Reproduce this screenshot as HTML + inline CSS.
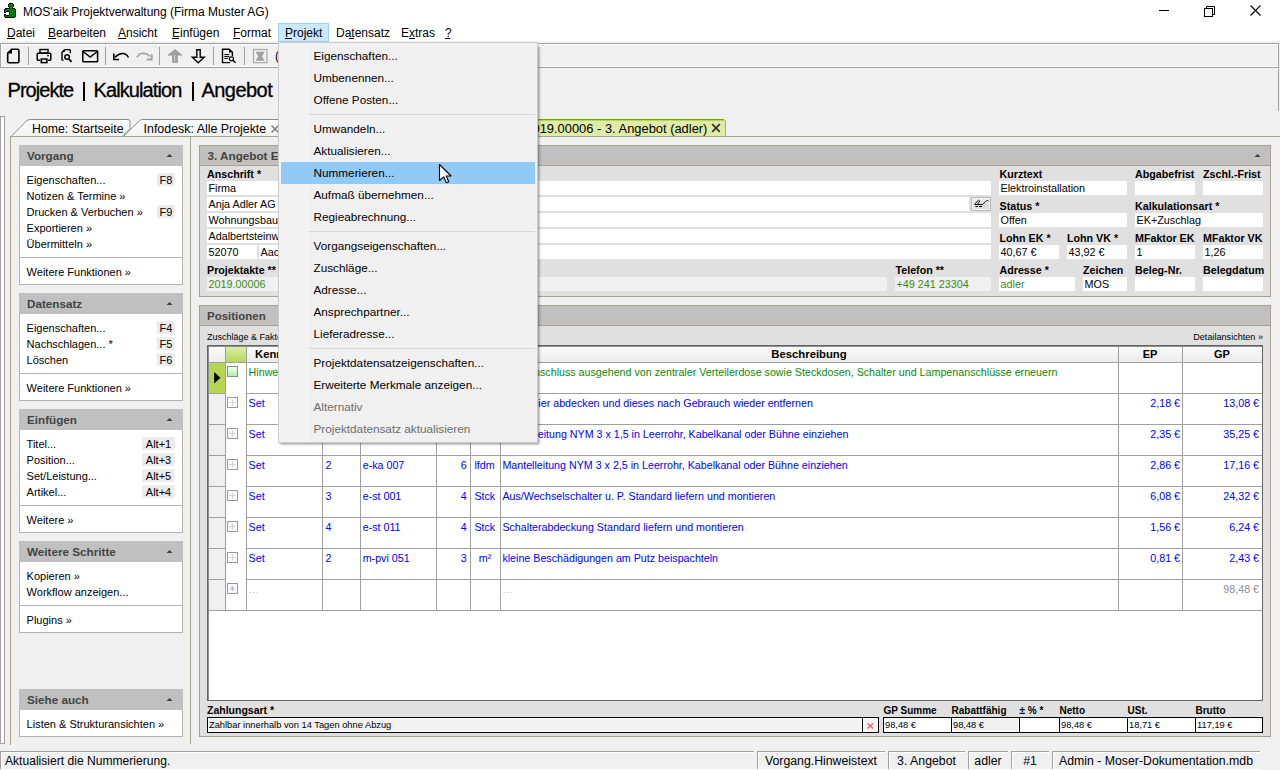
<!DOCTYPE html><html><head><meta charset="utf-8"><style>
html,body{margin:0;padding:0;}
body{width:1280px;height:770px;position:relative;overflow:hidden;background:#f0f0f0;font-family:"Liberation Sans",sans-serif;}
div{position:absolute;box-sizing:border-box;}
.t{white-space:nowrap;line-height:1;}
u{text-decoration:none;border-bottom:1px solid currentColor;}
</style></head><body>
<div style="left:0px;top:0px;width:1280px;height:41px;background:#fff"></div>
<svg style="position:absolute;left:0px;top:0px;" width="22" height="22" viewBox="0 0 22 22"><g shape-rendering="crispEdges"><rect x="9" y="3" width="1" height="1" fill="#000"/><rect x="10" y="3" width="1" height="1" fill="#000"/><rect x="11" y="3" width="1" height="1" fill="#000"/><rect x="12" y="3" width="1" height="1" fill="#000"/><rect x="8" y="4" width="1" height="1" fill="#000"/><rect x="9" y="4" width="1" height="1" fill="#008000"/><rect x="10" y="4" width="1" height="1" fill="#008000"/><rect x="11" y="4" width="1" height="1" fill="#008000"/><rect x="12" y="4" width="1" height="1" fill="#008000"/><rect x="13" y="4" width="1" height="1" fill="#000"/><rect x="8" y="5" width="1" height="1" fill="#000"/><rect x="9" y="5" width="1" height="1" fill="#008000"/><rect x="10" y="5" width="1" height="1" fill="#008000"/><rect x="11" y="5" width="1" height="1" fill="#008000"/><rect x="12" y="5" width="1" height="1" fill="#008000"/><rect x="13" y="5" width="1" height="1" fill="#000"/><rect x="8" y="6" width="1" height="1" fill="#000"/><rect x="9" y="6" width="1" height="1" fill="#008000"/><rect x="10" y="6" width="1" height="1" fill="#008000"/><rect x="11" y="6" width="1" height="1" fill="#008000"/><rect x="12" y="6" width="1" height="1" fill="#008000"/><rect x="13" y="6" width="1" height="1" fill="#000"/><rect x="9" y="7" width="1" height="1" fill="#000"/><rect x="10" y="7" width="1" height="1" fill="#008000"/><rect x="11" y="7" width="1" height="1" fill="#008000"/><rect x="12" y="7" width="1" height="1" fill="#000"/><rect x="5" y="8" width="1" height="1" fill="#000"/><rect x="6" y="8" width="1" height="1" fill="#000"/><rect x="7" y="8" width="1" height="1" fill="#000"/><rect x="8" y="8" width="1" height="1" fill="#000"/><rect x="9" y="8" width="1" height="1" fill="#000"/><rect x="10" y="8" width="1" height="1" fill="#008000"/><rect x="11" y="8" width="1" height="1" fill="#008000"/><rect x="12" y="8" width="1" height="1" fill="#000"/><rect x="13" y="8" width="1" height="1" fill="#000"/><rect x="14" y="8" width="1" height="1" fill="#000"/><rect x="4" y="9" width="1" height="1" fill="#000"/><rect x="15" y="9" width="1" height="1" fill="#000"/><rect x="5" y="9" width="1" height="1" fill="#008000"/><rect x="6" y="9" width="1" height="1" fill="#008000"/><rect x="7" y="9" width="1" height="1" fill="#008000"/><rect x="8" y="9" width="1" height="1" fill="#008000"/><rect x="9" y="9" width="1" height="1" fill="#008000"/><rect x="10" y="9" width="1" height="1" fill="#008000"/><rect x="11" y="9" width="1" height="1" fill="#008000"/><rect x="12" y="9" width="1" height="1" fill="#008000"/><rect x="13" y="9" width="1" height="1" fill="#008000"/><rect x="14" y="9" width="1" height="1" fill="#008000"/><rect x="4" y="10" width="1" height="1" fill="#000"/><rect x="15" y="10" width="1" height="1" fill="#000"/><rect x="5" y="10" width="1" height="1" fill="#008000"/><rect x="6" y="10" width="1" height="1" fill="#008000"/><rect x="7" y="10" width="1" height="1" fill="#008000"/><rect x="8" y="10" width="1" height="1" fill="#008000"/><rect x="9" y="10" width="1" height="1" fill="#008000"/><rect x="10" y="10" width="1" height="1" fill="#008000"/><rect x="11" y="10" width="1" height="1" fill="#008000"/><rect x="12" y="10" width="1" height="1" fill="#008000"/><rect x="13" y="10" width="1" height="1" fill="#008000"/><rect x="14" y="10" width="1" height="1" fill="#008000"/><rect x="4" y="16" width="1" height="1" fill="#000"/><rect x="15" y="16" width="1" height="1" fill="#000"/><rect x="5" y="16" width="1" height="1" fill="#008000"/><rect x="6" y="16" width="1" height="1" fill="#008000"/><rect x="7" y="16" width="1" height="1" fill="#008000"/><rect x="8" y="16" width="1" height="1" fill="#008000"/><rect x="9" y="16" width="1" height="1" fill="#008000"/><rect x="10" y="16" width="1" height="1" fill="#008000"/><rect x="11" y="16" width="1" height="1" fill="#008000"/><rect x="12" y="16" width="1" height="1" fill="#008000"/><rect x="13" y="16" width="1" height="1" fill="#008000"/><rect x="14" y="16" width="1" height="1" fill="#008000"/><rect x="4" y="11" width="1" height="1" fill="#000"/><rect x="5" y="11" width="1" height="1" fill="#008000"/><rect x="6" y="11" width="1" height="1" fill="#000"/><rect x="7" y="11" width="1" height="1" fill="#000"/><rect x="8" y="11" width="1" height="1" fill="#000"/><rect x="15" y="11" width="1" height="1" fill="#000"/><rect x="9" y="11" width="1" height="1" fill="#008000"/><rect x="10" y="11" width="1" height="1" fill="#008000"/><rect x="11" y="11" width="1" height="1" fill="#008000"/><rect x="12" y="11" width="1" height="1" fill="#008000"/><rect x="13" y="11" width="1" height="1" fill="#008000"/><rect x="14" y="11" width="1" height="1" fill="#008000"/><rect x="4" y="15" width="1" height="1" fill="#000"/><rect x="5" y="15" width="1" height="1" fill="#008000"/><rect x="6" y="15" width="1" height="1" fill="#000"/><rect x="7" y="15" width="1" height="1" fill="#000"/><rect x="8" y="15" width="1" height="1" fill="#000"/><rect x="15" y="15" width="1" height="1" fill="#000"/><rect x="9" y="15" width="1" height="1" fill="#008000"/><rect x="10" y="15" width="1" height="1" fill="#008000"/><rect x="11" y="15" width="1" height="1" fill="#008000"/><rect x="12" y="15" width="1" height="1" fill="#008000"/><rect x="13" y="15" width="1" height="1" fill="#008000"/><rect x="14" y="15" width="1" height="1" fill="#008000"/><rect x="4" y="12" width="1" height="1" fill="#000"/><rect x="5" y="12" width="1" height="1" fill="#000"/><rect x="6" y="12" width="1" height="1" fill="#fff"/><rect x="7" y="12" width="1" height="1" fill="#fff"/><rect x="8" y="12" width="1" height="1" fill="#fff"/><rect x="9" y="12" width="1" height="1" fill="#000"/><rect x="15" y="12" width="1" height="1" fill="#000"/><rect x="10" y="12" width="1" height="1" fill="#008000"/><rect x="11" y="12" width="1" height="1" fill="#008000"/><rect x="12" y="12" width="1" height="1" fill="#008000"/><rect x="13" y="12" width="1" height="1" fill="#008000"/><rect x="14" y="12" width="1" height="1" fill="#008000"/><rect x="4" y="14" width="1" height="1" fill="#000"/><rect x="5" y="14" width="1" height="1" fill="#000"/><rect x="6" y="14" width="1" height="1" fill="#fff"/><rect x="7" y="14" width="1" height="1" fill="#fff"/><rect x="8" y="14" width="1" height="1" fill="#fff"/><rect x="9" y="14" width="1" height="1" fill="#000"/><rect x="15" y="14" width="1" height="1" fill="#000"/><rect x="10" y="14" width="1" height="1" fill="#008000"/><rect x="11" y="14" width="1" height="1" fill="#008000"/><rect x="12" y="14" width="1" height="1" fill="#008000"/><rect x="13" y="14" width="1" height="1" fill="#008000"/><rect x="14" y="14" width="1" height="1" fill="#008000"/><rect x="4" y="13" width="1" height="1" fill="#fff"/><rect x="5" y="13" width="1" height="1" fill="#fff"/><rect x="6" y="13" width="1" height="1" fill="#fff"/><rect x="7" y="13" width="1" height="1" fill="#fff"/><rect x="8" y="13" width="1" height="1" fill="#fff"/><rect x="9" y="13" width="1" height="1" fill="#000"/><rect x="15" y="13" width="1" height="1" fill="#000"/><rect x="10" y="13" width="1" height="1" fill="#008000"/><rect x="11" y="13" width="1" height="1" fill="#008000"/><rect x="12" y="13" width="1" height="1" fill="#008000"/><rect x="13" y="13" width="1" height="1" fill="#008000"/><rect x="14" y="13" width="1" height="1" fill="#008000"/><rect x="5" y="17" width="1" height="1" fill="#000"/><rect x="6" y="17" width="1" height="1" fill="#000"/><rect x="7" y="17" width="1" height="1" fill="#000"/><rect x="8" y="17" width="1" height="1" fill="#000"/><rect x="9" y="17" width="1" height="1" fill="#000"/><rect x="10" y="17" width="1" height="1" fill="#000"/><rect x="11" y="17" width="1" height="1" fill="#000"/><rect x="12" y="17" width="1" height="1" fill="#000"/><rect x="13" y="17" width="1" height="1" fill="#000"/><rect x="14" y="17" width="1" height="1" fill="#000"/></g></svg>
<div class="t" style="left:23px;top:6px;font-size:12px;color:#000;font-weight:normal;">MOS&#x27;aik Projektverwaltung (Firma Muster AG)</div>
<div style="left:1159px;top:10px;width:10px;height:1px;background:#000"></div>
<svg style="position:absolute;left:1200px;top:3px;" width="16" height="16" viewBox="0 0 16 16"><rect x="4.5" y="5.5" width="8" height="8" fill="none" stroke="#000" stroke-width="1"/><path d="M6.5 5.5v-2h8v8h-2" fill="none" stroke="#000" stroke-width="1"/></svg>
<svg style="position:absolute;left:1248px;top:3px;" width="16" height="16" viewBox="0 0 16 16"><path d="M2.5 2.5l10 10M12.5 2.5l-10 10" stroke="#000" stroke-width="1.1"/></svg>
<div style="left:278px;top:23px;width:51px;height:19px;background:#cce8ff;border:1px solid #99d1ff"></div>
<div class="t" style="left:7px;top:27px;font-size:12px;color:#000;font-weight:normal;">Datei</div>
<div class="t" style="left:48px;top:27px;font-size:12px;color:#000;font-weight:normal;">Bearbeiten</div>
<div class="t" style="left:118px;top:27px;font-size:12px;color:#000;font-weight:normal;">Ansicht</div>
<div class="t" style="left:172px;top:27px;font-size:12px;color:#000;font-weight:normal;">Einfügen</div>
<div class="t" style="left:233px;top:27px;font-size:12px;color:#000;font-weight:normal;">Format</div>
<div class="t" style="left:285px;top:27px;font-size:12px;color:#000;font-weight:normal;">Projekt</div>
<div class="t" style="left:336px;top:27px;font-size:12px;color:#000;font-weight:normal;">Datensatz</div>
<div class="t" style="left:401px;top:27px;font-size:12px;color:#000;font-weight:normal;">Extras</div>
<div class="t" style="left:445px;top:27px;font-size:12px;color:#000;font-weight:normal;">?</div>
<div style="left:7px;top:38px;width:8px;height:1px;background:#000"></div>
<div style="left:48px;top:38px;width:8px;height:1px;background:#000"></div>
<div style="left:118px;top:38px;width:8px;height:1px;background:#000"></div>
<div style="left:172px;top:38px;width:7px;height:1px;background:#000"></div>
<div style="left:233px;top:38px;width:7px;height:1px;background:#000"></div>
<div style="left:285px;top:38px;width:7px;height:1px;background:#000"></div>
<div style="left:349px;top:38px;width:5px;height:1px;background:#000"></div>
<div style="left:409px;top:38px;width:6px;height:1px;background:#000"></div>
<div style="left:445px;top:38px;width:5px;height:1px;background:#000"></div>
<div style="left:0px;top:43px;width:1279px;height:25px;background:#f0f0f0;border:1px solid #a0a0a0;box-shadow:inset 1px 1px 0 #fff, inset -1px -1px 0 #fff"></div>
<div style="left:28px;top:47px;width:1px;height:18px;background:#a0a0a0"></div>
<div style="left:105px;top:47px;width:1px;height:18px;background:#a0a0a0"></div>
<div style="left:159px;top:47px;width:1px;height:18px;background:#a0a0a0"></div>
<div style="left:213px;top:47px;width:1px;height:18px;background:#a0a0a0"></div>
<div style="left:244px;top:47px;width:1px;height:18px;background:#a0a0a0"></div>
<svg style="position:absolute;left:5px;top:47px;" width="16" height="18" viewBox="0 0 16 18"><path d="M7 2.2h5.6a1.3 1.3 0 0 1 1.3 1.3v11a1.3 1.3 0 0 1-1.3 1.3h-8.6a1.3 1.3 0 0 1-1.3-1.3v-8.4z" fill="none" stroke="#000" stroke-width="1.6" stroke-linejoin="round"/><path d="M7 2.2v4.2h-4.3z" fill="#000"/></svg>
<svg style="position:absolute;left:35px;top:47px;" width="18" height="18" viewBox="0 0 18 18"><rect x="5" y="2.5" width="8" height="3.5" fill="none" stroke="#000" stroke-width="1.4"/><path d="M5.2 13.2h-2a1 1 0 0 1-1-1v-5a1 1 0 0 1 1-1h11.6a1 1 0 0 1 1 1v5a1 1 0 0 1-1 1h-2" fill="none" stroke="#000" stroke-width="1.5"/><rect x="6.3" y="12" width="5.6" height="3.6" fill="none" stroke="#000" stroke-width="1.5"/><circle cx="13" cy="8.6" r="0.9" fill="#000"/></svg>
<svg style="position:absolute;left:59px;top:47px;" width="16" height="18" viewBox="0 0 16 18"><path d="M6 2.6h4.5a0.8 0.8 0 0 1 0.8 0.8v2.6M4.5 13.4h-0.5a1 1 0 0 1-1-1v-7l2.8-2.8" fill="none" stroke="#000" stroke-width="1.4"/><path d="M6 2.6v2.2h-2.2z" fill="#000"/><circle cx="8.1" cy="10" r="2.3" fill="none" stroke="#000" stroke-width="1.5"/><path d="M9.8 11.8l2.8 3" stroke="#000" stroke-width="1.7"/></svg>
<svg style="position:absolute;left:80px;top:47px;" width="20" height="18" viewBox="0 0 20 18"><rect x="2.8" y="3.7" width="14.8" height="11" rx="0.8" fill="none" stroke="#000" stroke-width="1.5"/><path d="M3 4.5l7.2 5.6 7.2-5.6" fill="none" stroke="#000" stroke-width="1.5"/></svg>
<svg style="position:absolute;left:110px;top:47px;" width="22" height="18" viewBox="0 0 22 18"><path d="M18.5 10.5c-2.6-5-8.5-5.5-13.5-0.2" fill="none" stroke="#000" stroke-width="1.5"/><path d="M3.8 6.5v6h5.2" fill="none" stroke="#000" stroke-width="1.6"/></svg>
<svg style="position:absolute;left:134px;top:47px;" width="22" height="18" viewBox="0 0 22 18"><path d="M2.8 10.3l3.2-3.5 3.5-0.5 3 0.6 3.8 2.5" fill="none" stroke="#a0a0a0" stroke-width="1.6"/><path d="M17.8 7.2v5.3h-5" fill="none" stroke="#a0a0a0" stroke-width="1.8"/></svg>
<svg style="position:absolute;left:166px;top:47px;" width="18" height="18" viewBox="0 0 18 18"><path d="M9 2.5l6.8 5.6h-4.4v7.4h-4.8v-7.4h-4.4z" fill="#a0a0a0" stroke="#a0a0a0" stroke-width="1"/><path d="M8.5 8.5v6M8.5 8.5h1" stroke="#f0f0f0" stroke-width="0.6"/></svg>
<svg style="position:absolute;left:190px;top:47px;" width="18" height="18" viewBox="0 0 18 18"><path d="M6.8 2.8h3.4v7.4h4l-6 5.5-5.9-5.5h4.5z" fill="none" stroke="#000" stroke-width="1.4" stroke-linejoin="miter"/></svg>
<svg style="position:absolute;left:220px;top:47px;" width="18" height="18" viewBox="0 0 18 18"><path d="M9.3 2.3h-6.8v13.3h7.6M9.3 2.3l3.1 3v4" fill="none" stroke="#000" stroke-width="1.4"/><path d="M9 2.5v3h3z" fill="#000"/><path d="M4.3 7.6h5M4.3 9.5h5M4.3 11.4h3.8" stroke="#000" stroke-width="1"/><circle cx="11.5" cy="11.8" r="2" fill="#fff" stroke="#000" stroke-width="1.3"/><path d="M13 13.3l2.6 2.5" stroke="#000" stroke-width="1.3"/></svg>
<svg style="position:absolute;left:251px;top:47px;" width="18" height="18" viewBox="0 0 18 18"><rect x="2.5" y="2.5" width="13.5" height="13.2" fill="none" stroke="#a8a8a8" stroke-width="1.2"/><path d="M4.5 4.8h9.2l-2.8 4.4 2.8 4.6h-9.2l2.8-4.6z" fill="#a0a0a0"/></svg>
<div class="t" style="left:275px;top:50px;font-size:12px;color:#000;font-weight:normal;">(</div>
<div style="left:0px;top:116px;width:5px;height:628px;border:1px solid #a0a0a0;background:#fff"></div>
<div style="left:1278px;top:69px;width:2px;height:42px;border-left:1px solid #a0a0a0"></div>
<div style="left:1278px;top:136px;width:2px;height:608px;border-left:1px solid #a0a0a0"></div>
<div class="t" style="left:7.5px;top:80px;font-size:20px;color:#000;font-weight:normal;letter-spacing:-0.95px;-webkit-text-stroke:0.3px #000">Projekte</div>
<div style="left:83px;top:82px;width:2px;height:19px;background:#000"></div>
<div class="t" style="left:93.5px;top:80px;font-size:20px;color:#000;font-weight:normal;letter-spacing:-0.9px;-webkit-text-stroke:0.3px #000">Kalkulation</div>
<div style="left:192px;top:82px;width:2px;height:19px;background:#000"></div>
<div class="t" style="left:201.5px;top:80px;font-size:20px;color:#000;font-weight:normal;letter-spacing:-0.55px;-webkit-text-stroke:0.3px #000">Angebot</div>
<div style="left:10px;top:136px;width:1270px;height:609px;border-left:1px solid #a6a491;border-top:1px solid #a6a491;background:#f0f0f0"></div>
<div style="left:190px;top:137px;width:2px;height:607px;border-left:1px solid #a6a491"></div>
<svg style="position:absolute;left:10px;top:118px;" width="132" height="19" viewBox="0 0 132 19"><defs><linearGradient id="tg" x1="0" y1="0" x2="0" y2="1"><stop offset="0" stop-color="#ffffff"/><stop offset="1" stop-color="#f2f2f2"/></linearGradient></defs><path d="M1 18.5L16 3.5q2-2 4-2h98a2 2 0 0 1 2 2v7l-8 8z" fill="url(#tg)" stroke="#8c8c8c" stroke-width="1"/></svg>
<div class="t" style="left:32px;top:123px;font-size:12.3px;color:#000;font-weight:normal;">Home: Startseite</div>
<svg style="position:absolute;left:122px;top:118px;" width="170" height="19" viewBox="0 0 170 19"><defs><linearGradient id="tg2" x1="0" y1="0" x2="0" y2="1"><stop offset="0" stop-color="#ffffff"/><stop offset="1" stop-color="#f2f2f2"/></linearGradient></defs><path d="M1.5 18.5L16.5 3.5q2-2 4-2h148v17z" fill="url(#tg2)" stroke="#8c8c8c" stroke-width="1"/></svg>
<div class="t" style="left:143.6px;top:123px;font-size:12.4px;color:#000;font-weight:normal;">Infodesk: Alle Projekte</div>
<svg style="position:absolute;left:270px;top:124px;" width="10" height="10" viewBox="0 0 10 10"><path d="M1.5 1.5l7 7M8.5 1.5l-7 7" stroke="#808080" stroke-width="1.6"/></svg>
<svg style="position:absolute;left:480px;top:118px;" width="247" height="19" viewBox="0 0 247 19"><path d="M1 18L18 1h226l1 1v16z" fill="#dfeba6"/><path d="M18 1.5h225.5" stroke="#6aa000" stroke-width="1"/><path d="M17 2.5h227" stroke="#b6da4e" stroke-width="1"/><path d="M245.5 3v15" stroke="#a6a6a6" stroke-width="1"/><path d="M244 1.5l1.5 1.5" stroke="#8ab850" stroke-width="1"/></svg>
<div class="t" style="right:572.6px;top:123px;font-size:12.9px;color:#000;font-weight:normal;">2019.00006 - 3. Angebot (adler)</div>
<svg style="position:absolute;left:710px;top:122px;" width="12" height="12" viewBox="0 0 12 12"><path d="M2.2 2.2l7.6 7.6M9.8 2.2l-7.6 7.6" stroke="#383838" stroke-width="1.8"/></svg>
<div style="left:10px;top:136px;width:1270px;height:1px;background:#a6a491"></div>
<div style="left:19px;top:145px;width:164px;height:21px;background:#c0c0c0"></div>
<div class="t" style="left:27px;top:150px;font-size:11.7px;color:#444;font-weight:bold;">Vorgang</div>
<svg style="position:absolute;left:166px;top:153px;" width="8" height="5" viewBox="0 0 8 5"><path d="M0.5 4L3.5 1 6.5 4z" fill="#404040"/></svg>
<div style="left:19px;top:166px;width:164px;height:119px;background:#fff;border:1px solid #b4b4b4;border-top:none"></div>
<div class="t" style="left:26.6px;top:175px;font-size:11px;color:#000;font-weight:normal;">Eigenschaften...</div>
<div style="left:157px;top:173.0px;width:18px;height:12.8px;background:#ececec"></div>
<div class="t" style="left:-34.0px;width:400px;text-align:center;top:175px;font-size:11px;color:#000;font-weight:normal;">F8</div>
<div class="t" style="left:26.6px;top:191px;font-size:11px;color:#000;font-weight:normal;">Notizen &amp; Termine »</div>
<div class="t" style="left:26.6px;top:207px;font-size:11px;color:#000;font-weight:normal;">Drucken &amp; Verbuchen »</div>
<div style="left:157px;top:205.0px;width:18px;height:12.8px;background:#ececec"></div>
<div class="t" style="left:-34.0px;width:400px;text-align:center;top:207px;font-size:11px;color:#000;font-weight:normal;">F9</div>
<div class="t" style="left:26.6px;top:223px;font-size:11px;color:#000;font-weight:normal;">Exportieren »</div>
<div class="t" style="left:26.6px;top:239px;font-size:11px;color:#000;font-weight:normal;">Übermitteln »</div>
<div style="left:19px;top:257px;width:164px;height:1px;background:#b4b4b4"></div>
<div class="t" style="left:26.6px;top:267px;font-size:11px;color:#000;font-weight:normal;">Weitere Funktionen »</div>
<div style="left:19px;top:293px;width:164px;height:21px;background:#c0c0c0"></div>
<div class="t" style="left:27px;top:298px;font-size:11.7px;color:#444;font-weight:bold;">Datensatz</div>
<svg style="position:absolute;left:166px;top:301px;" width="8" height="5" viewBox="0 0 8 5"><path d="M0.5 4L3.5 1 6.5 4z" fill="#404040"/></svg>
<div style="left:19px;top:314px;width:164px;height:87px;background:#fff;border:1px solid #b4b4b4;border-top:none"></div>
<div class="t" style="left:26.6px;top:323px;font-size:11px;color:#000;font-weight:normal;">Eigenschaften...</div>
<div style="left:157px;top:321.0px;width:18px;height:12.8px;background:#ececec"></div>
<div class="t" style="left:-34.0px;width:400px;text-align:center;top:323px;font-size:11px;color:#000;font-weight:normal;">F4</div>
<div class="t" style="left:26.6px;top:339px;font-size:11px;color:#000;font-weight:normal;">Nachschlagen... *</div>
<div style="left:157px;top:337.0px;width:18px;height:12.8px;background:#ececec"></div>
<div class="t" style="left:-34.0px;width:400px;text-align:center;top:339px;font-size:11px;color:#000;font-weight:normal;">F5</div>
<div class="t" style="left:26.6px;top:355px;font-size:11px;color:#000;font-weight:normal;">Löschen</div>
<div style="left:157px;top:353.0px;width:18px;height:12.8px;background:#ececec"></div>
<div class="t" style="left:-34.0px;width:400px;text-align:center;top:355px;font-size:11px;color:#000;font-weight:normal;">F6</div>
<div style="left:19px;top:373px;width:164px;height:1px;background:#b4b4b4"></div>
<div class="t" style="left:26.6px;top:383px;font-size:11px;color:#000;font-weight:normal;">Weitere Funktionen »</div>
<div style="left:19px;top:409px;width:164px;height:21px;background:#c0c0c0"></div>
<div class="t" style="left:27px;top:414px;font-size:11.7px;color:#444;font-weight:bold;">Einfügen</div>
<svg style="position:absolute;left:166px;top:417px;" width="8" height="5" viewBox="0 0 8 5"><path d="M0.5 4L3.5 1 6.5 4z" fill="#404040"/></svg>
<div style="left:19px;top:430px;width:164px;height:103px;background:#fff;border:1px solid #b4b4b4;border-top:none"></div>
<div class="t" style="left:26.6px;top:439px;font-size:11px;color:#000;font-weight:normal;">Titel...</div>
<div style="left:142px;top:437.2px;width:33px;height:12.8px;background:#ececec"></div>
<div class="t" style="left:-41.5px;width:400px;text-align:center;top:439px;font-size:11px;color:#000;font-weight:normal;">Alt+1</div>
<div class="t" style="left:26.6px;top:455px;font-size:11px;color:#000;font-weight:normal;">Position...</div>
<div style="left:142px;top:453.2px;width:33px;height:12.8px;background:#ececec"></div>
<div class="t" style="left:-41.5px;width:400px;text-align:center;top:455px;font-size:11px;color:#000;font-weight:normal;">Alt+3</div>
<div class="t" style="left:26.6px;top:471px;font-size:11px;color:#000;font-weight:normal;">Set/Leistung...</div>
<div style="left:142px;top:469.2px;width:33px;height:12.8px;background:#ececec"></div>
<div class="t" style="left:-41.5px;width:400px;text-align:center;top:471px;font-size:11px;color:#000;font-weight:normal;">Alt+5</div>
<div class="t" style="left:26.6px;top:487px;font-size:11px;color:#000;font-weight:normal;">Artikel...</div>
<div style="left:142px;top:485.2px;width:33px;height:12.8px;background:#ececec"></div>
<div class="t" style="left:-41.5px;width:400px;text-align:center;top:487px;font-size:11px;color:#000;font-weight:normal;">Alt+4</div>
<div style="left:19px;top:505px;width:164px;height:1px;background:#b4b4b4"></div>
<div class="t" style="left:26.6px;top:515px;font-size:11px;color:#000;font-weight:normal;">Weitere »</div>
<div style="left:19px;top:541px;width:164px;height:21px;background:#c0c0c0"></div>
<div class="t" style="left:27px;top:546px;font-size:11.7px;color:#444;font-weight:bold;">Weitere Schritte</div>
<svg style="position:absolute;left:166px;top:549px;" width="8" height="5" viewBox="0 0 8 5"><path d="M0.5 4L3.5 1 6.5 4z" fill="#404040"/></svg>
<div style="left:19px;top:562px;width:164px;height:71px;background:#fff;border:1px solid #b4b4b4;border-top:none"></div>
<div class="t" style="left:26.6px;top:571px;font-size:11px;color:#000;font-weight:normal;">Kopieren »</div>
<div class="t" style="left:26.6px;top:587px;font-size:11px;color:#000;font-weight:normal;">Workflow anzeigen...</div>
<div style="left:19px;top:605px;width:164px;height:1px;background:#b4b4b4"></div>
<div class="t" style="left:26.6px;top:615px;font-size:11px;color:#000;font-weight:normal;">Plugins »</div>
<div style="left:19px;top:689px;width:164px;height:21px;background:#c0c0c0"></div>
<div class="t" style="left:27px;top:694px;font-size:11.7px;color:#444;font-weight:bold;">Siehe auch</div>
<svg style="position:absolute;left:166px;top:697px;" width="8" height="5" viewBox="0 0 8 5"><path d="M0.5 4L3.5 1 6.5 4z" fill="#404040"/></svg>
<div style="left:19px;top:710px;width:164px;height:27px;background:#fff;border:1px solid #b4b4b4;border-top:none"></div>
<div class="t" style="left:26.6px;top:719px;font-size:11px;color:#000;font-weight:normal;">Listen &amp; Strukturansichten »</div>
<div style="left:199px;top:145px;width:1072px;height:152px;border:1px solid #a6a491;background:#e0e0e0"></div>
<div style="left:200px;top:146px;width:1070px;height:20px;background:#c0c0c0;border-bottom:1px solid #a6a491"></div>
<div class="t" style="left:207.5px;top:150px;font-size:11.7px;color:#444;font-weight:bold;">3. Angebot Elektroinstallation</div>
<svg style="position:absolute;left:1254px;top:153px;" width="8" height="5" viewBox="0 0 8 5"><path d="M0.5 4L3.5 1 6.5 4z" fill="#404040"/></svg>
<div class="t" style="left:207px;top:169px;font-size:10.7px;color:#000;font-weight:bold;">Anschrift *</div>
<div style="left:207px;top:181px;width:784px;height:14px;background:#fff"></div>
<div class="t" style="left:208.5px;top:183px;font-size:10.8px;color:#000;font-weight:normal;">Firma</div>
<div style="left:207px;top:197px;width:762px;height:14px;background:#fff"></div>
<div class="t" style="left:208.5px;top:199px;font-size:10.8px;color:#000;font-weight:normal;">Anja Adler AG</div>
<div style="left:971px;top:197px;width:20px;height:14px;background:linear-gradient(#ececec,#d9d9d9);border:1px solid #b8b8b8;box-shadow:inset 0 0 0 1px #f6f6f6"></div>
<svg style="position:absolute;left:971px;top:196px;" width="20" height="14" viewBox="0 0 20 14"><path d="M3.5 8.5L6.5 5l1.2-0.8 1 0.8-2.2 3.5" fill="none" stroke="#000" stroke-width="0.9"/><path d="M4 8.5h7.5M4.5 10.5h2.5M8 10.5h3" stroke="#000" stroke-width="1"/><path d="M11.5 8.5l4-3.8 1.2-0.3 1 1" fill="none" stroke="#000" stroke-width="0.9"/></svg>
<div style="left:207px;top:213px;width:784px;height:14px;background:#fff"></div>
<div class="t" style="left:208.5px;top:215px;font-size:10.8px;color:#000;font-weight:normal;">Wohnungsbaugesellschaft</div>
<div style="left:207px;top:229px;width:784px;height:14px;background:#fff"></div>
<div class="t" style="left:208.5px;top:231px;font-size:10.8px;color:#000;font-weight:normal;">Adalbertsteinweg</div>
<div style="left:207px;top:245px;width:50px;height:14px;background:#fff"></div>
<div class="t" style="left:208.5px;top:247px;font-size:10.8px;color:#000;font-weight:normal;">52070</div>
<div style="left:259px;top:245px;width:732px;height:14px;background:#fff"></div>
<div class="t" style="left:260.5px;top:247px;font-size:10.8px;color:#000;font-weight:normal;">Aachen</div>
<div class="t" style="left:207px;top:265px;font-size:10.7px;color:#000;font-weight:bold;">Projektakte **</div>
<div style="left:207px;top:277px;width:680px;height:14px;background:#f0f0f0"></div>
<div class="t" style="left:208.5px;top:279px;font-size:10.8px;color:#3a8a1a;font-weight:normal;">2019.00006</div>
<div class="t" style="left:895.5px;top:265px;font-size:10.7px;color:#000;font-weight:bold;">Telefon **</div>
<div style="left:895px;top:277px;width:96px;height:14px;background:#f0f0f0"></div>
<div class="t" style="left:896.5px;top:279px;font-size:10.8px;color:#3a8a1a;font-weight:normal;">+49 241 23304</div>
<div class="t" style="left:999.5px;top:169px;font-size:10.7px;color:#000;font-weight:bold;">Kurztext</div>
<div style="left:999px;top:181px;width:128px;height:14px;background:#fff"></div>
<div class="t" style="left:1000.5px;top:183px;font-size:10.8px;color:#000;font-weight:normal;">Elektroinstallation</div>
<div class="t" style="left:1135px;top:169px;font-size:10.7px;color:#000;font-weight:bold;">Abgabefrist</div>
<div style="left:1135px;top:181px;width:60px;height:14px;background:#fff"></div>
<div class="t" style="left:1203px;top:169px;font-size:10.7px;color:#000;font-weight:bold;">Zschl.-Frist</div>
<div style="left:1203px;top:181px;width:60px;height:14px;background:#fff"></div>
<div class="t" style="left:999.5px;top:201px;font-size:10.7px;color:#000;font-weight:bold;">Status *</div>
<div style="left:999px;top:213px;width:128px;height:14px;background:#fff"></div>
<div class="t" style="left:1000.5px;top:215px;font-size:10.8px;color:#000;font-weight:normal;">Offen</div>
<div class="t" style="left:1135px;top:201px;font-size:10.7px;color:#000;font-weight:bold;">Kalkulationsart *</div>
<div style="left:1135px;top:213px;width:128px;height:14px;background:#fff"></div>
<div class="t" style="left:1136.5px;top:215px;font-size:10.8px;color:#000;font-weight:normal;">EK+Zuschlag</div>
<div class="t" style="left:999.5px;top:233px;font-size:10.7px;color:#000;font-weight:bold;">Lohn EK *</div>
<div style="left:999px;top:245px;width:60px;height:14px;background:#fff"></div>
<div class="t" style="left:1000.5px;top:247px;font-size:10.8px;color:#000;font-weight:normal;">40,67 €</div>
<div class="t" style="left:1067px;top:233px;font-size:10.7px;color:#000;font-weight:bold;">Lohn VK *</div>
<div style="left:1067px;top:245px;width:60px;height:14px;background:#fff"></div>
<div class="t" style="left:1068.5px;top:247px;font-size:10.8px;color:#000;font-weight:normal;">43,92 €</div>
<div class="t" style="left:1135px;top:233px;font-size:10.7px;color:#000;font-weight:bold;">MFaktor EK</div>
<div style="left:1135px;top:245px;width:60px;height:14px;background:#fff"></div>
<div class="t" style="left:1136.5px;top:247px;font-size:10.8px;color:#000;font-weight:normal;">1</div>
<div class="t" style="left:1203px;top:233px;font-size:10.7px;color:#000;font-weight:bold;">MFaktor VK</div>
<div style="left:1203px;top:245px;width:60px;height:14px;background:#fff"></div>
<div class="t" style="left:1204.5px;top:247px;font-size:10.8px;color:#000;font-weight:normal;">1,26</div>
<div class="t" style="left:999.5px;top:265px;font-size:10.7px;color:#000;font-weight:bold;">Adresse *</div>
<div style="left:999px;top:277px;width:76px;height:14px;background:#fff"></div>
<div class="t" style="left:1000.5px;top:279px;font-size:10.8px;color:#3a8a1a;font-weight:normal;">adler</div>
<div class="t" style="left:1083px;top:265px;font-size:10.7px;color:#000;font-weight:bold;">Zeichen</div>
<div style="left:1083px;top:277px;width:44px;height:14px;background:#fff"></div>
<div class="t" style="left:1084.5px;top:279px;font-size:10.8px;color:#000;font-weight:normal;">MOS</div>
<div class="t" style="left:1135px;top:265px;font-size:10.7px;color:#000;font-weight:bold;">Beleg-Nr.</div>
<div style="left:1135px;top:277px;width:60px;height:14px;background:#fff"></div>
<div class="t" style="left:1203px;top:265px;font-size:10.7px;color:#000;font-weight:bold;">Belegdatum</div>
<div style="left:1203px;top:277px;width:60px;height:14px;background:#fff"></div>
<div style="left:199px;top:305px;width:1072px;height:432px;border:1px solid #a6a491;background:#e0e0e0"></div>
<div style="left:200px;top:306px;width:1070px;height:20px;background:#c0c0c0;border-bottom:1px solid #a6a491"></div>
<div class="t" style="left:207px;top:311px;font-size:11.5px;color:#444;font-weight:bold;">Positionen</div>
<div class="t" style="left:207px;top:333px;font-size:9px;color:#000;font-weight:normal;">Zuschläge &amp; Faktoren</div>
<div class="t" style="right:17px;top:333px;font-size:9.1px;color:#000;font-weight:normal;">Detailansichten »</div>
<div style="left:207px;top:345px;width:1056px;height:356px;background:#fff;border:1px solid #646464;box-shadow:inset 1px 1px 0 #8e8e8e"></div>
<div style="left:209px;top:347px;width:1053px;height:15px;background:linear-gradient(#fafafa,#ececec)"></div>
<div style="left:226px;top:347px;width:20px;height:15px;background:linear-gradient(#dcebA8,#b4d65a)"></div>
<div style="left:209px;top:362px;width:1053px;height:1px;background:#a0a0a0"></div>
<div style="left:225px;top:347px;width:1px;height:264px;background:#a0a0a0"></div>
<div style="left:246px;top:347px;width:1px;height:264px;background:#a0a0a0"></div>
<div style="left:322px;top:347px;width:1px;height:264px;background:#a0a0a0"></div>
<div style="left:360px;top:347px;width:1px;height:264px;background:#a0a0a0"></div>
<div style="left:436px;top:347px;width:1px;height:264px;background:#a0a0a0"></div>
<div style="left:470px;top:347px;width:1px;height:264px;background:#a0a0a0"></div>
<div style="left:500px;top:347px;width:1px;height:264px;background:#a0a0a0"></div>
<div style="left:1118px;top:347px;width:1px;height:264px;background:#a0a0a0"></div>
<div style="left:1182px;top:347px;width:1px;height:264px;background:#a0a0a0"></div>
<div style="left:209px;top:393px;width:16px;height:1px;background:#a0a0a0"></div>
<div style="left:246px;top:393px;width:1016px;height:1px;background:#a0a0a0"></div>
<div style="left:209px;top:424px;width:16px;height:1px;background:#a0a0a0"></div>
<div style="left:246px;top:424px;width:1016px;height:1px;background:#a0a0a0"></div>
<div style="left:209px;top:455px;width:16px;height:1px;background:#a0a0a0"></div>
<div style="left:246px;top:455px;width:1016px;height:1px;background:#a0a0a0"></div>
<div style="left:209px;top:486px;width:16px;height:1px;background:#a0a0a0"></div>
<div style="left:246px;top:486px;width:1016px;height:1px;background:#a0a0a0"></div>
<div style="left:209px;top:517px;width:16px;height:1px;background:#a0a0a0"></div>
<div style="left:246px;top:517px;width:1016px;height:1px;background:#a0a0a0"></div>
<div style="left:209px;top:548px;width:16px;height:1px;background:#a0a0a0"></div>
<div style="left:246px;top:548px;width:1016px;height:1px;background:#a0a0a0"></div>
<div style="left:209px;top:579px;width:16px;height:1px;background:#a0a0a0"></div>
<div style="left:246px;top:579px;width:1016px;height:1px;background:#a0a0a0"></div>
<div style="left:209px;top:610px;width:1053px;height:1px;background:#a0a0a0"></div>
<div style="left:209px;top:363px;width:16px;height:30px;background:#b5d652"></div>
<div style="left:209px;top:394px;width:16px;height:30px;background:#efefef"></div>
<div style="left:209px;top:425px;width:16px;height:30px;background:#efefef"></div>
<div style="left:209px;top:456px;width:16px;height:30px;background:#efefef"></div>
<div style="left:209px;top:487px;width:16px;height:30px;background:#efefef"></div>
<div style="left:209px;top:518px;width:16px;height:30px;background:#efefef"></div>
<div style="left:209px;top:549px;width:16px;height:30px;background:#efefef"></div>
<div style="left:209px;top:580px;width:16px;height:30px;background:#efefef"></div>
<svg style="position:absolute;left:212px;top:370px;" width="12" height="15" viewBox="0 0 12 15"><path d="M2.2 2l6.2 5.7-6.2 5.7z" fill="#000"/></svg>
<div class="t" style="left:255px;top:349px;font-size:11.3px;color:#000;font-weight:bold;">Kennung</div>
<div class="t" style="left:609px;width:400px;text-align:center;top:349px;font-size:11.3px;color:#000;font-weight:bold;">Beschreibung</div>
<div class="t" style="left:950px;width:400px;text-align:center;top:349px;font-size:11px;color:#000;font-weight:bold;">EP</div>
<div class="t" style="left:1022px;width:400px;text-align:center;top:349px;font-size:11px;color:#000;font-weight:bold;">GP</div>
<svg style="position:absolute;left:226px;top:366px;" width="13" height="12" viewBox="0 0 13 12"><defs><linearGradient id="cb" x1="0" y1="0" x2="0" y2="1"><stop offset="0" stop-color="#fafffa"/><stop offset="1" stop-color="#a8eea8"/></linearGradient></defs><rect x="1.5" y="0.5" width="10" height="10" fill="url(#cb)" stroke="#8a8a8a" stroke-width="1"/></svg>
<div class="t" style="left:248.6px;top:367px;font-size:10.7px;color:#0a8a0a;font-weight:normal;">Hinweis</div>
<div class="t" style="right:701.4px;top:367px;font-size:10.7px;color:#0a8a0a;font-weight:normal;white-space:pre">Elektroinstallation: Anschluss </div>
<div class="t" style="left:578.6px;top:367px;font-size:10.7px;color:#0a8a0a;font-weight:normal;">ausgehend von zentraler Verteilerdose sowie Steckdosen, Schalter und Lampenanschlüsse erneuern</div>
<svg style="position:absolute;left:226px;top:396px;" width="13" height="13" viewBox="0 0 13 13"><rect x="1.5" y="1.5" width="10" height="10" fill="#fafafa" stroke="#9a9a9a" stroke-width="1"/><path d="M3.5 6.5h6M6.5 3.5v6" stroke="#d2d2d2" stroke-width="1"/></svg>
<div class="t" style="left:248.6px;top:398px;font-size:10.7px;color:#0000ff;font-weight:normal;">Set</div>
<div class="t" style="left:325.4px;top:398px;font-size:10.7px;color:#0000ff;font-weight:normal;">1</div>
<div class="t" style="left:362.7px;top:398px;font-size:10.7px;color:#0000ff;font-weight:normal;">m-bso 001</div>
<div class="t" style="right:813.3px;top:398px;font-size:10.7px;color:#0000ff;font-weight:normal;">6</div>
<div class="t" style="left:285px;width:400px;text-align:center;top:398px;font-size:10.7px;color:#0000ff;font-weight:normal;">m²</div>
<div class="t" style="right:726.8px;top:398px;font-size:10.7px;color:#0000ff;font-weight:normal;white-space:pre">Boden mit Papier </div>
<div class="t" style="left:553.2px;top:398px;font-size:10.7px;color:#0000ff;font-weight:normal;">abdecken und dieses nach Gebrauch wieder entfernen</div>
<div class="t" style="right:100px;top:398px;font-size:10.7px;color:#0000ff;font-weight:normal;">2,18 €</div>
<div class="t" style="right:21px;top:398px;font-size:10.7px;color:#0000ff;font-weight:normal;">13,08 €</div>
<svg style="position:absolute;left:226px;top:427px;" width="13" height="13" viewBox="0 0 13 13"><rect x="1.5" y="1.5" width="10" height="10" fill="#fafafa" stroke="#9a9a9a" stroke-width="1"/><path d="M3.5 6.5h6M6.5 3.5v6" stroke="#d2d2d2" stroke-width="1"/></svg>
<div class="t" style="left:248.6px;top:429px;font-size:10.7px;color:#0000ff;font-weight:normal;">Set</div>
<div class="t" style="left:325.4px;top:429px;font-size:10.7px;color:#0000ff;font-weight:normal;">2</div>
<div class="t" style="left:362.7px;top:429px;font-size:10.7px;color:#0000ff;font-weight:normal;">e-ka 005</div>
<div class="t" style="right:813.3px;top:429px;font-size:10.7px;color:#0000ff;font-weight:normal;">15</div>
<div class="t" style="left:474.4px;top:429px;font-size:10.7px;color:#0000ff;font-weight:normal;">lfdm</div>
<div class="t" style="right:710.2px;top:429px;font-size:10.7px;color:#0000ff;font-weight:normal;white-space:pre">Mantelleitung </div>
<div class="t" style="left:569.8px;top:429px;font-size:10.7px;color:#0000ff;font-weight:normal;">NYM 3 x 1,5 in Leerrohr, Kabelkanal oder Bühne einziehen</div>
<div class="t" style="right:100px;top:429px;font-size:10.7px;color:#0000ff;font-weight:normal;">2,35 €</div>
<div class="t" style="right:21px;top:429px;font-size:10.7px;color:#0000ff;font-weight:normal;">35,25 €</div>
<svg style="position:absolute;left:226px;top:458px;" width="13" height="13" viewBox="0 0 13 13"><rect x="1.5" y="1.5" width="10" height="10" fill="#fafafa" stroke="#9a9a9a" stroke-width="1"/><path d="M3.5 6.5h6M6.5 3.5v6" stroke="#d2d2d2" stroke-width="1"/></svg>
<div class="t" style="left:248.6px;top:460px;font-size:10.7px;color:#0000ff;font-weight:normal;">Set</div>
<div class="t" style="left:325.4px;top:460px;font-size:10.7px;color:#0000ff;font-weight:normal;">2</div>
<div class="t" style="left:362.7px;top:460px;font-size:10.7px;color:#0000ff;font-weight:normal;">e-ka 007</div>
<div class="t" style="right:813.3px;top:460px;font-size:10.7px;color:#0000ff;font-weight:normal;">6</div>
<div class="t" style="left:474.4px;top:460px;font-size:10.7px;color:#0000ff;font-weight:normal;">lfdm</div>
<div class="t" style="left:502.4px;top:460px;font-size:10.7px;color:#0000ff;font-weight:normal;">Mantelleitung NYM 3 x 2,5 in Leerrohr, Kabelkanal oder Bühne einziehen</div>
<div class="t" style="right:100px;top:460px;font-size:10.7px;color:#0000ff;font-weight:normal;">2,86 €</div>
<div class="t" style="right:21px;top:460px;font-size:10.7px;color:#0000ff;font-weight:normal;">17,16 €</div>
<svg style="position:absolute;left:226px;top:489px;" width="13" height="13" viewBox="0 0 13 13"><rect x="1.5" y="1.5" width="10" height="10" fill="#fafafa" stroke="#9a9a9a" stroke-width="1"/><path d="M3.5 6.5h6M6.5 3.5v6" stroke="#d2d2d2" stroke-width="1"/></svg>
<div class="t" style="left:248.6px;top:491px;font-size:10.7px;color:#0000ff;font-weight:normal;">Set</div>
<div class="t" style="left:325.4px;top:491px;font-size:10.7px;color:#0000ff;font-weight:normal;">3</div>
<div class="t" style="left:362.7px;top:491px;font-size:10.7px;color:#0000ff;font-weight:normal;">e-st 001</div>
<div class="t" style="right:813.3px;top:491px;font-size:10.7px;color:#0000ff;font-weight:normal;">4</div>
<div class="t" style="left:474.4px;top:491px;font-size:10.7px;color:#0000ff;font-weight:normal;">Stck</div>
<div class="t" style="left:502.4px;top:491px;font-size:10.7px;color:#0000ff;font-weight:normal;">Aus/Wechselschalter u. P. Standard liefern und montieren</div>
<div class="t" style="right:100px;top:491px;font-size:10.7px;color:#0000ff;font-weight:normal;">6,08 €</div>
<div class="t" style="right:21px;top:491px;font-size:10.7px;color:#0000ff;font-weight:normal;">24,32 €</div>
<svg style="position:absolute;left:226px;top:520px;" width="13" height="13" viewBox="0 0 13 13"><rect x="1.5" y="1.5" width="10" height="10" fill="#fafafa" stroke="#9a9a9a" stroke-width="1"/><path d="M3.5 6.5h6M6.5 3.5v6" stroke="#d2d2d2" stroke-width="1"/></svg>
<div class="t" style="left:248.6px;top:522px;font-size:10.7px;color:#0000ff;font-weight:normal;">Set</div>
<div class="t" style="left:325.4px;top:522px;font-size:10.7px;color:#0000ff;font-weight:normal;">4</div>
<div class="t" style="left:362.7px;top:522px;font-size:10.7px;color:#0000ff;font-weight:normal;">e-st 011</div>
<div class="t" style="right:813.3px;top:522px;font-size:10.7px;color:#0000ff;font-weight:normal;">4</div>
<div class="t" style="left:474.4px;top:522px;font-size:10.7px;color:#0000ff;font-weight:normal;">Stck</div>
<div class="t" style="left:502.4px;top:522px;font-size:10.7px;color:#0000ff;font-weight:normal;">Schalterabdeckung Standard liefern und montieren</div>
<div class="t" style="right:100px;top:522px;font-size:10.7px;color:#0000ff;font-weight:normal;">1,56 €</div>
<div class="t" style="right:21px;top:522px;font-size:10.7px;color:#0000ff;font-weight:normal;">6,24 €</div>
<svg style="position:absolute;left:226px;top:551px;" width="13" height="13" viewBox="0 0 13 13"><rect x="1.5" y="1.5" width="10" height="10" fill="#fafafa" stroke="#9a9a9a" stroke-width="1"/><path d="M3.5 6.5h6M6.5 3.5v6" stroke="#d2d2d2" stroke-width="1"/></svg>
<div class="t" style="left:248.6px;top:553px;font-size:10.7px;color:#0000ff;font-weight:normal;">Set</div>
<div class="t" style="left:325.4px;top:553px;font-size:10.7px;color:#0000ff;font-weight:normal;">2</div>
<div class="t" style="left:362.7px;top:553px;font-size:10.7px;color:#0000ff;font-weight:normal;">m-pvi 051</div>
<div class="t" style="right:813.3px;top:553px;font-size:10.7px;color:#0000ff;font-weight:normal;">3</div>
<div class="t" style="left:285px;width:400px;text-align:center;top:553px;font-size:10.7px;color:#0000ff;font-weight:normal;">m²</div>
<div class="t" style="left:502.4px;top:553px;font-size:10.7px;color:#0000ff;font-weight:normal;">kleine Beschädigungen am Putz beispachteln</div>
<div class="t" style="right:100px;top:553px;font-size:10.7px;color:#0000ff;font-weight:normal;">0,81 €</div>
<div class="t" style="right:21px;top:553px;font-size:10.7px;color:#0000ff;font-weight:normal;">2,43 €</div>
<svg style="position:absolute;left:226px;top:582px;" width="13" height="13" viewBox="0 0 13 13"><rect x="1.5" y="1.5" width="10" height="10" fill="#fafafa" stroke="#9a9a9a" stroke-width="1"/><path d="M6.5 4v5M4.3 5.2l4.4 2.6M8.7 5.2l-4.4 2.6" stroke="#bcb2cc" stroke-width="0.9"/></svg>
<div class="t" style="left:249px;top:587px;font-size:8px;color:#9888b0;font-weight:normal;letter-spacing:1.1px">...</div>
<div class="t" style="left:503px;top:587px;font-size:8px;color:#9888b0;font-weight:normal;letter-spacing:1.1px">...</div>
<div class="t" style="right:21px;top:584px;font-size:10.7px;color:#909090;font-weight:normal;">98,48 €</div>
<div class="t" style="left:207px;top:705px;font-size:10.5px;color:#000;font-weight:bold;">Zahlungsart *</div>
<div style="left:207px;top:717px;width:672px;height:16px;background:#000"></div>
<div style="left:208px;top:718px;width:654px;height:14px;background:#f2f2f2;border:1px solid #fff"></div>
<div style="left:863px;top:718px;width:15px;height:14px;background:#f2f2f2;border:1px solid #fff"></div>
<svg style="position:absolute;left:864px;top:719px;" width="12" height="12" viewBox="0 0 12 12"><path d="M3.5 4.5l5.5 5M9 4.5l-5.5 5" stroke="#f65a5a" stroke-width="1.3"/></svg>
<div class="t" style="left:209px;top:721px;font-size:9.3px;color:#000;font-weight:normal;">Zahlbar innerhalb von 14 Tagen ohne Abzug</div>
<div style="left:883px;top:717px;width:380px;height:16px;background:#000"></div>
<div class="t" style="left:883.5px;top:706px;font-size:10px;color:#000;font-weight:bold;">GP Summe</div>
<div style="left:884px;top:718px;width:67px;height:14px;background:#fff"></div>
<div class="t" style="left:885px;top:721px;font-size:9.3px;color:#000;font-weight:normal;">98,48 €</div>
<div class="t" style="left:951.5px;top:706px;font-size:10px;color:#000;font-weight:bold;">Rabattfähig</div>
<div style="left:952px;top:718px;width:67px;height:14px;background:#f0f0f0;border:1px solid #fff"></div>
<div class="t" style="left:953px;top:721px;font-size:9.3px;color:#000;font-weight:normal;">98,48 €</div>
<div class="t" style="left:1019.5px;top:706px;font-size:10px;color:#000;font-weight:bold;">± % *</div>
<div style="left:1020px;top:718px;width:39px;height:14px;background:#fff"></div>
<div class="t" style="left:1059.5px;top:706px;font-size:10px;color:#000;font-weight:bold;">Netto</div>
<div style="left:1060px;top:718px;width:67px;height:14px;background:#fff"></div>
<div class="t" style="left:1061px;top:721px;font-size:9.3px;color:#000;font-weight:normal;">98,48 €</div>
<div class="t" style="left:1127.5px;top:706px;font-size:10px;color:#000;font-weight:bold;">USt.</div>
<div style="left:1128px;top:718px;width:67px;height:14px;background:#fff"></div>
<div class="t" style="left:1129px;top:721px;font-size:9.3px;color:#000;font-weight:normal;">18,71 €</div>
<div class="t" style="left:1195.5px;top:706px;font-size:10px;color:#000;font-weight:bold;">Brutto</div>
<div style="left:1196px;top:718px;width:66px;height:14px;background:#fff"></div>
<div class="t" style="left:1197px;top:721px;font-size:9.3px;color:#000;font-weight:normal;">117,19 €</div>
<div style="left:0px;top:750px;width:1280px;height:20px;background:#f0f0f0"></div>
<div style="left:0px;top:751px;width:754px;height:18px;border-top:1px solid #a0a0a0;border-left:1px solid #a0a0a0;box-shadow:inset 1px 1px 0 #fff"></div>
<div style="left:0px;top:769px;width:1261px;height:1px;background:#fff"></div>
<div class="t" style="left:5px;top:755px;font-size:12.1px;color:#000;font-weight:normal;">Aktualisiert die Nummerierung.</div>
<div style="left:757px;top:751px;width:128px;height:18px;border-top:1px solid #a0a0a0;border-left:1px solid #a0a0a0;box-shadow:inset 1px 1px 0 #fff"></div>
<div class="t" style="left:621.0px;width:400px;text-align:center;top:755px;font-size:12.3px;color:#000;font-weight:normal;">Vorgang.Hinweistext</div>
<div style="left:888px;top:751px;width:77px;height:18px;border-top:1px solid #a0a0a0;border-left:1px solid #a0a0a0;box-shadow:inset 1px 1px 0 #fff"></div>
<div class="t" style="left:726.5px;width:400px;text-align:center;top:755px;font-size:12.3px;color:#000;font-weight:normal;">3. Angebot</div>
<div style="left:968px;top:751px;width:40px;height:18px;border-top:1px solid #a0a0a0;border-left:1px solid #a0a0a0;box-shadow:inset 1px 1px 0 #fff"></div>
<div class="t" style="left:788.0px;width:400px;text-align:center;top:755px;font-size:12.3px;color:#000;font-weight:normal;">adler</div>
<div style="left:1011px;top:751px;width:38px;height:18px;border-top:1px solid #a0a0a0;border-left:1px solid #a0a0a0;box-shadow:inset 1px 1px 0 #fff"></div>
<div class="t" style="left:830.0px;width:400px;text-align:center;top:755px;font-size:12.3px;color:#000;font-weight:normal;">#1</div>
<div style="left:1052px;top:751px;width:208px;height:18px;border-top:1px solid #a0a0a0;border-left:1px solid #a0a0a0;box-shadow:inset 1px 1px 0 #fff"></div>
<div class="t" style="left:956.0px;width:400px;text-align:center;top:755px;font-size:12.3px;color:#000;font-weight:normal;">Admin - Moser-Dokumentation.mdb</div>
<div style="left:281px;top:46px;width:259px;height:399px;background:rgba(0,0,0,0.10);filter:blur(1px)"></div>
<div style="left:280px;top:47px;width:259px;height:397px;background:rgba(0,0,0,0.33);filter:blur(1px)"></div>
<div style="left:278px;top:42px;width:260px;height:401px;background:#f0f0f0;border:1px solid #cccccc"></div>
<div style="left:279px;top:43px;width:30px;height:399px;background:#f2f2f2"></div>
<div class="t" style="left:313.5px;top:50px;font-size:11.75px;color:#000;font-weight:normal;">Eigenschaften...</div>
<div class="t" style="left:313.5px;top:72px;font-size:11.75px;color:#000;font-weight:normal;">Umbenennen...</div>
<div class="t" style="left:313.5px;top:94px;font-size:11.75px;color:#000;font-weight:normal;">Offene Posten...</div>
<div style="left:309px;top:114px;width:226px;height:1px;background:#d7d7d7"></div>
<div class="t" style="left:313.5px;top:123px;font-size:11.75px;color:#000;font-weight:normal;">Umwandeln...</div>
<div class="t" style="left:313.5px;top:145px;font-size:11.75px;color:#000;font-weight:normal;">Aktualisieren...</div>
<div style="left:281px;top:162px;width:254px;height:22px;background:#91c9f7"></div>
<div class="t" style="left:313.5px;top:167px;font-size:11.75px;color:#000;font-weight:normal;">Nummerieren...</div>
<div class="t" style="left:313.5px;top:189px;font-size:11.75px;color:#000;font-weight:normal;">Aufmaß übernehmen...</div>
<div class="t" style="left:313.5px;top:211px;font-size:11.75px;color:#000;font-weight:normal;">Regieabrechnung...</div>
<div style="left:309px;top:231px;width:226px;height:1px;background:#d7d7d7"></div>
<div class="t" style="left:313.5px;top:240px;font-size:11.75px;color:#000;font-weight:normal;">Vorgangseigenschaften...</div>
<div class="t" style="left:313.5px;top:262px;font-size:11.75px;color:#000;font-weight:normal;">Zuschläge...</div>
<div class="t" style="left:313.5px;top:284px;font-size:11.75px;color:#000;font-weight:normal;">Adresse...</div>
<div class="t" style="left:313.5px;top:306px;font-size:11.75px;color:#000;font-weight:normal;">Ansprechpartner...</div>
<div class="t" style="left:313.5px;top:328px;font-size:11.75px;color:#000;font-weight:normal;">Lieferadresse...</div>
<div style="left:309px;top:348px;width:226px;height:1px;background:#d7d7d7"></div>
<div class="t" style="left:313.5px;top:357px;font-size:11.75px;color:#000;font-weight:normal;">Projektdatensatzeigenschaften...</div>
<div class="t" style="left:313.5px;top:379px;font-size:11.75px;color:#000;font-weight:normal;">Erweiterte Merkmale anzeigen...</div>
<div class="t" style="left:313.5px;top:401px;font-size:11.75px;color:#6d6d6d;font-weight:normal;">Alternativ</div>
<div class="t" style="left:313.5px;top:423px;font-size:11.75px;color:#6d6d6d;font-weight:normal;">Projektdatensatz aktualisieren</div>
<svg style="position:absolute;left:437px;top:162px;" width="18" height="24" viewBox="0 0 18 24"><path d="M2.5 2.5v16l4.2-3.7 2.7 6 2.4-1.1-2.6-5.7h4.9z" fill="#fff" stroke="#000" stroke-width="1.1" stroke-linejoin="round"/></svg>
</body></html>
